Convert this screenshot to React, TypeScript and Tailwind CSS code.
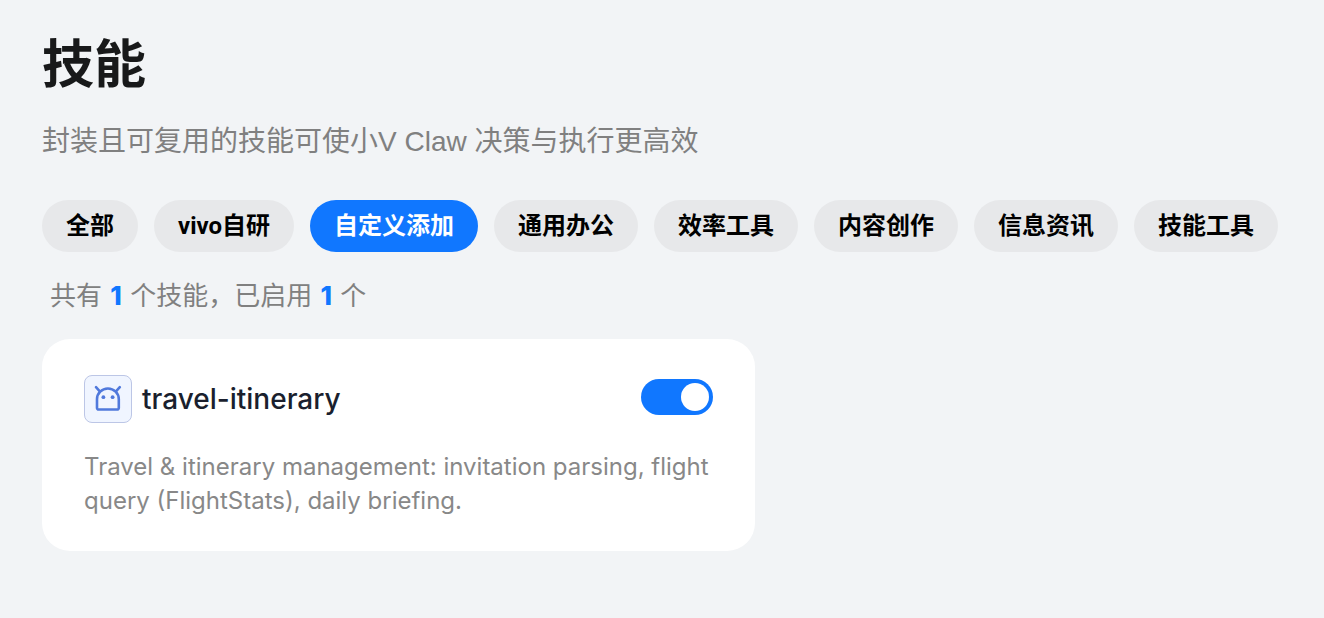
import React, { useState } from 'react';

interface Skill {
  id: string;
  name: string;
  description: string;
}

const categories = ['全部', 'vivo自研', '自定义添加', '通用办公', '效率工具', '内容创作', '信息资讯', '技能工具'];

const skills: Skill[] = [
  {
    id: 'travel-itinerary',
    name: 'travel-itinerary',
    description: 'Travel & itinerary management: invitation parsing, flight query (FlightStats), daily briefing.',
  },
];

const RobotIcon: React.FC = () => (
  <span className="flex h-12 w-12 shrink-0 items-center justify-center rounded-lg border border-[#bcc6e6] bg-[#f0f5ff]">
    <svg viewBox="0 0 28 28" className="h-7 w-7" fill="none" stroke="#5079dc" strokeWidth="2.6" strokeLinecap="round" strokeLinejoin="round" aria-hidden="true">
      <path d="M2 2.2 L5.8 6.4 M25.8 2.2 L22 6.4" />
      <path d="M3 14.2 A10.9 10.7 0 0 1 24.8 14.2 V22.9 A1.6 1.6 0 0 1 23.2 24.5 H4.6 A1.6 1.6 0 0 1 3 22.9 Z" />
      <circle cx="9.4" cy="12.2" r="1.9" fill="#5079dc" stroke="none" />
      <circle cx="18.6" cy="12.2" r="1.9" fill="#5079dc" stroke="none" />
    </svg>
  </span>
);

const App: React.FC = () => {
  const [active, setActive] = useState('自定义添加');
  const [enabled, setEnabled] = useState<string[]>(['travel-itinerary']);

  const toggle = (id: string) => {
    setEnabled((prev) => (prev.includes(id) ? prev.filter((item) => item !== id) : [...prev, id]));
  };

  return (
    <main className="min-h-screen bg-[#f2f4f6] px-[42px] pt-[33px] pb-16 font-[Inter,'Noto_Sans_CJK_SC',sans-serif]">
      <h1 className="text-[52px] leading-16 font-bold text-[#18191a]">技能</h1>
      <p className="mt-[25px] font-['Liberation_Sans','Noto_Sans_CJK_SC',sans-serif] text-[28px] leading-10 text-[#808080]">
        封装且可复用的技能可使小V Claw 决策与执行更高效
      </p>

      <div className="mt-[38px] flex flex-wrap gap-4">
        {categories.map((category) => (
          <button
            key={category}
            type="button"
            onClick={() => setActive(category)}
            className={`h-[52px] shrink-0 rounded-full px-6 font-[Roboto,'Noto_Sans_CJK_SC',sans-serif] text-2xl font-bold ${
              category === active ? 'bg-[#1077ff] text-white' : 'bg-[#e7e8ea] text-black'
            }`}
          >
            {category}
          </button>
        ))}
      </div>

      <p className="mt-6 px-2 text-[26px] leading-10 text-[#808080]">
        共有 <b className="mx-px font-extrabold text-[#1077ff]">{skills.length}</b> 个技能，已启用{' '}
        <b className="mx-px font-extrabold text-[#1077ff]">{enabled.length}</b> 个
      </p>

      <div className="mt-[23px] grid grid-cols-1 gap-y-6 md:grid-cols-[minmax(0,23fr)_minmax(0,17fr)]">
        {skills.map((skill) => (
          <article key={skill.id} className="rounded-[28px] bg-white px-[42px] pt-9 pb-[33px]">
            <div className="flex items-center gap-[10px]">
              <RobotIcon />
              <h2 className="text-[28px] leading-10 font-medium text-[#1a1f2e]">{skill.name}</h2>
              <label className="relative mb-1 ml-auto flex cursor-pointer">
                <input
                  type="checkbox"
                  role="switch"
                  aria-label={skill.name}
                  checked={enabled.includes(skill.id)}
                  onChange={() => toggle(skill.id)}
                  className="peer h-9 w-18 cursor-pointer appearance-none rounded-full bg-gray-300 checked:bg-[#1077ff]"
                />
                <span className="pointer-events-none absolute top-1 left-1 h-7 w-7 rounded-full bg-white peer-checked:left-10" />
              </label>
            </div>
            <p className="mt-[27px] text-2xl leading-[34px] text-[#888888]">{skill.description}</p>
          </article>
        ))}
      </div>
    </main>
  );
};

export default App;
